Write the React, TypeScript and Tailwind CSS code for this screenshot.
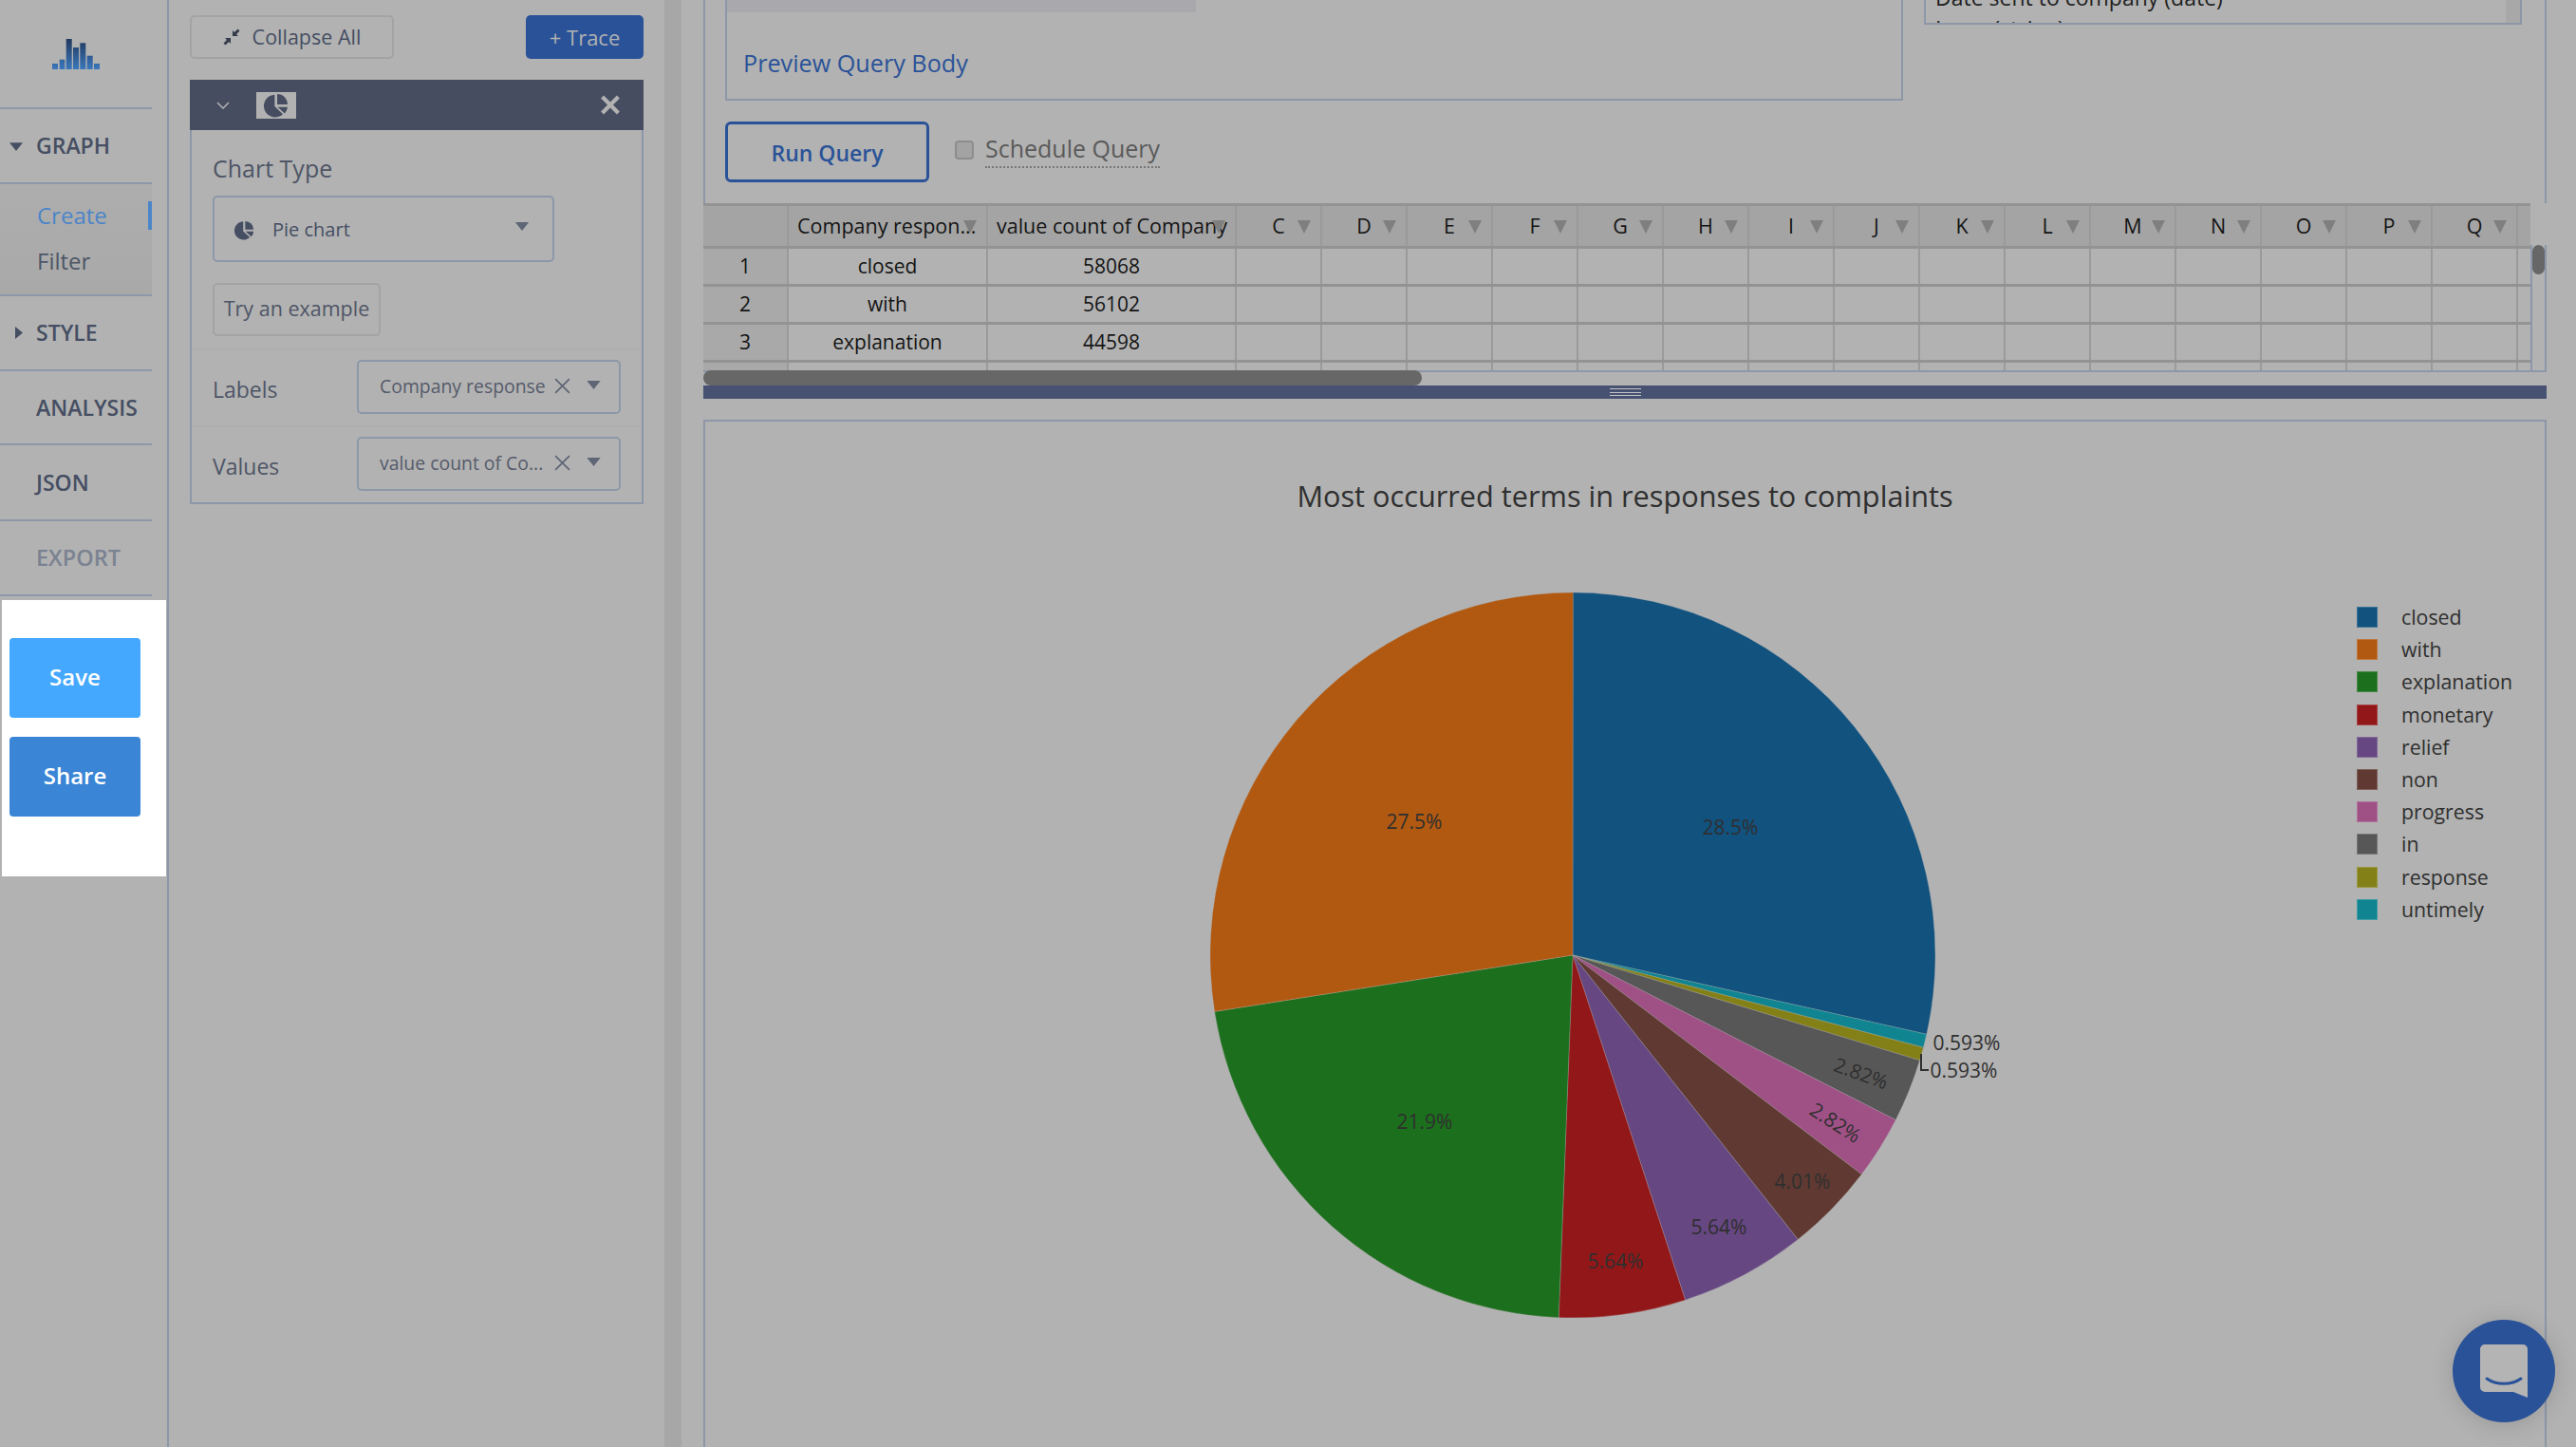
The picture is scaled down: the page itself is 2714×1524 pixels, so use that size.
const slices = [
  { name: "closed", pct: 28.5, color: "#11527f" },
  { name: "untimely", pct: 0.593, color: "#108591" },
  { name: "response", pct: 0.593, color: "#848018" },
  { name: "in", pct: 2.82, color: "#575757" },
  { name: "progress", pct: 2.82, color: "#9f5186" },
  { name: "non", pct: 4.01, color: "#603a32" },
  { name: "relief", pct: 5.64, color: "#664782" },
  { name: "monetary", pct: 5.64, color: "#921718" },
  { name: "explanation", pct: 21.9, color: "#1c6f1c" },
  { name: "with", pct: 27.5, color: "#b25911" },
];

const legendItems = ["closed", "with", "explanation", "monetary", "relief", "non", "progress", "in", "response", "untimely"];

const pieLabels = [
  { text: "28.5%", x: 1823, y: 871, rotate: 0 },
  { text: "27.5%", x: 1490, y: 865, rotate: 0 },
  { text: "21.9%", x: 1501, y: 1181, rotate: 0 },
  { text: "5.64%", x: 1702, y: 1328, rotate: 0 },
  { text: "5.64%", x: 1811, y: 1292, rotate: 0 },
  { text: "4.01%", x: 1899, y: 1244, rotate: 0 },
  { text: "2.82%", x: 1934, y: 1182, rotate: 33 },
  { text: "2.82%", x: 1961, y: 1130, rotate: 20 },
  { text: "0.593%", x: 2072, y: 1098, rotate: 0 },
  { text: "0.593%", x: 2069, y: 1127, rotate: 0 },
];

const letterCols = ["C", "D", "E", "F", "G", "H", "I", "J", "K", "L", "M", "N", "O", "P", "Q"];

const rows = [
  ["1", "closed", "58068"],
  ["2", "with", "56102"],
  ["3", "explanation", "44598"],
  ["", "", ""],
];

const logoBars = [
  { x: 0, w: 6, top: 26 },
  { x: 7.7, w: 5.6, top: 21.7 },
  { x: 14.7, w: 6, top: 0 },
  { x: 22, w: 6, top: 9 },
  { x: 29.3, w: 6, top: 4.3 },
  { x: 36.7, w: 6, top: 17.7 },
  { x: 44, w: 6, top: 26 },
];

function slicePath(startPct: number, pct: number) {
  const cx = 1657;
  const cy = 1006;
  const r = 382;
  const a0 = (startPct / 100) * Math.PI * 2;
  const a1 = ((startPct + pct) / 100) * Math.PI * 2;
  const large = pct > 50 ? 1 : 0;
  return `M${cx} ${cy}L${cx + r * Math.sin(a0)} ${cy - r * Math.cos(a0)}A${r} ${r} 0 ${large} 1 ${cx + r * Math.sin(a1)} ${cy - r * Math.cos(a1)}Z`;
}

function Caret({ className }: { className: string }) {
  return (
    <svg viewBox="0 0 16 10" className={className}>
      <path d="M0 0h16L8 10z" fill="currentColor" />
    </svg>
  );
}

function PieGlyph({ className }: { className: string }) {
  return (
    <svg viewBox="0 0 24 24" className={className}>
      <path d="M10.500 1.500V13l8 7.500A11 11 0 1 1 10.500 1.500z" fill="currentColor" />
      <path d="M13 1a10 10 0 0 1 10 10H13z" fill="currentColor" />
      <path d="M13.500 13.500H23a10 10 0 0 1-2.800 6.300z" fill="currentColor" />
    </svg>
  );
}

function SectionLabel({ label, height, caret, muted }: { label: string; height: string; caret?: "down" | "right"; muted?: boolean }) {
  return (
    <div className={`relative flex w-[160px] items-center border-b-2 border-[#8c97a8] pl-[38px] ${height}`}>
      {caret === "down" && <Caret className="absolute left-[10px] top-[35px] h-[9px] w-[14px] text-[#454e62]" />}
      {caret === "right" && (
        <svg viewBox="0 0 10 16" className="absolute left-[16px] top-[31px] h-[15px] w-[8px] text-[#454e62]">
          <path d="M0 0v16l10-8z" fill="currentColor" />
        </svg>
      )}
      <span className={`font-semibold ${muted ? "text-[23.500px] text-[#7a8291]" : "text-[23px] text-[#454e62]"}`}>{label}</span>
    </div>
  );
}

function Sidebar() {
  return (
    <aside className="flex w-[178px] shrink-0 flex-col border-r-2 border-[#8c97a8]">
      <div className="flex h-[115px] w-[160px] justify-center border-b-2 border-[#8c97a8] pt-[41px]">
        <svg viewBox="0 0 50 32" className="h-[32px] w-[50px]">
          <defs>
            <linearGradient id="logoFill" gradientUnits="userSpaceOnUse" x1="0" y1="0" x2="0" y2="32">
              <stop offset="0" stopColor="#22385c" />
              <stop offset="1" stopColor="#3a78bd" />
            </linearGradient>
          </defs>
          {logoBars.map((bar) => (
            <rect key={bar.x} x={bar.x} y={bar.top} width={bar.w} height={32 - bar.top} fill="url(#logoFill)" />
          ))}
        </svg>
      </div>
      <SectionLabel label="GRAPH" height="h-[79px]" caret="down" />
      <div className="relative flex h-[118px] w-[160px] flex-col border-b-2 border-[#8c97a8] bg-gradient-to-b from-[#adadad] to-[#a9a9a9] pl-[39px] pt-[9px] text-[24px] leading-[48px]">
        <span className="text-[#4c85c8]">Create</span>
        <span className="text-[#4e5566]">Filter</span>
        <div className="absolute right-0 top-[18px] h-[30px] w-[4px] bg-[#4c85c8]" />
      </div>
      <SectionLabel label="STYLE" height="h-[79px]" caret="right" />
      <SectionLabel label="ANALYSIS" height="h-[78px]" />
      <SectionLabel label="JSON" height="h-[80px]" />
      <SectionLabel label="EXPORT" height="h-[79px]" muted />
      <div className="ml-[2px] mt-[4px] flex h-[291px] w-[173px] flex-col gap-[20px] bg-white pl-[8px] pt-[40px]">
        <button className="h-[84px] w-[138px] rounded-[4px] bg-[#45a8ff] pb-[2px] text-[24px] font-semibold text-white">Save</button>
        <button className="h-[84px] w-[138px] rounded-[4px] bg-[#3a85d6] pb-[2px] text-[24px] font-semibold text-white">Share</button>
      </div>
    </aside>
  );
}

function FieldRow({ label, value }: { label: string; value: string }) {
  return (
    <div className="flex h-[81px] items-start justify-between border-t-2 border-[#aeaeae] pl-[22px] pr-[22px] pt-[10px]">
      <span className="mt-[14px] text-[23px] text-[#4e5566]">{label}</span>
      <div className="relative flex h-[57px] w-[278px] items-center rounded-[5px] border-2 border-[#8c97a8] pl-[22px] text-[19.400px] text-[#555b6a]">
        <span className="-mt-[1px]">{value}</span>
        <svg viewBox="0 0 16 16" className="absolute left-[206px] top-[17px] h-[17px] w-[17px] text-[#5c6373]">
          <path d="M1 1l14 14M15 1L1 15" stroke="currentColor" strokeWidth="1.500" fill="none" />
        </svg>
        <Caret className="absolute left-[240px] top-[20px] h-[9px] w-[15px] text-[#5f6675]" />
      </div>
    </div>
  );
}

function TracePanel() {
  return (
    <section className="w-[522px] shrink-0 px-[22px] pt-[16px]">
      <div className="flex items-center justify-between">
        <button className="flex h-[46px] w-[215px] items-center justify-center gap-[13px] rounded-[5px] border-2 border-[#a3a3a3] text-[21.500px] text-[#454e62]">
          <svg viewBox="0 0 18 18" className="h-[18px] w-[18px]">
            <path d="M10 8V2l2 2L15.500 0.500l2 2L14 6l2 2zM8 10v6l-2-2-3.500 3.500-2-2L4 12l-2-2z" fill="#333a49" />
          </svg>
          Collapse All
        </button>
        <button className="h-[46px] w-[124px] rounded-[5px] bg-[#2a5298] text-[22px] text-[#b2b2b2]">+ Trace</button>
      </div>
      <div className="mt-[22px] border-2 border-t-0 border-[#8c97a8]">
        <div className="-mx-[2px] flex h-[53px] items-center bg-[#474d61] pl-[28px] pr-[24px]">
          <svg viewBox="0 0 14 8" className="h-[8px] w-[14px] text-[#b2b2b2]">
            <path d="M1 1l6 6 6-6" stroke="currentColor" strokeWidth="1.500" fill="none" />
          </svg>
          <div className="ml-[28px] flex h-[28px] w-[42px] items-center justify-center bg-[#b2b2b2]">
            <PieGlyph className="h-[26px] w-[26px] text-[#474d61]" />
          </div>
          <svg viewBox="0 0 20 20" className="ml-auto h-[21px] w-[22px] text-[#b2b2b2]">
            <path d="M2 2l16 16M18 2L2 18" stroke="currentColor" strokeWidth="4" fill="none" />
          </svg>
        </div>
        <div className="px-[22px] pb-[13px] pt-[22px]">
          <div className="text-[25px] leading-[36px] text-[#4e5566]">Chart Type</div>
          <div className="relative mt-[11px] flex h-[70px] w-[360px] items-center rounded-[5px] border-2 border-[#8c97a8] pl-[21px] pt-[2px] text-[20px] text-[#454e62]">
            <PieGlyph className="h-[21px] w-[21px] text-[#454e62]" />
            <span className="ml-[19px]">Pie chart</span>
            <Caret className="absolute left-[316px] top-[26px] h-[9px] w-[16px] text-[#5f6675]" />
          </div>
          <button className="mt-[22px] flex h-[56px] w-[177px] items-center justify-center rounded-[5px] border-2 border-[#a3a3a3] pb-[1px] text-[21.500px] text-[#4e5566]">
            Try an example
          </button>
        </div>
        <FieldRow label="Labels" value="Company response" />
        <FieldRow label="Values" value="value count of Co..." />
      </div>
    </section>
  );
}

function HeaderCell({ label, width, alignLeft }: { label: string; width: string; alignLeft?: boolean }) {
  return (
    <div className={`relative flex h-full shrink-0 items-center border-r-2 border-[#9a9a9a] text-[21.500px] ${width} ${alignLeft ? "pl-[9px]" : "justify-center"}`}>
      <span className="whitespace-nowrap">{label}</span>
      <svg viewBox="0 0 14 14" className="absolute right-[10px] top-[15px] h-[14px] w-[14px] text-[#7f7f7f]">
        <path d="M0 0h14L7 14z" fill="currentColor" />
      </svg>
    </div>
  );
}

function QueryTable() {
  return (
    <div className="flex h-[176px] w-[1925px] shrink-0 flex-col overflow-hidden border-t-[3px] border-[#939393] text-[21px] text-[#141414]">
      <div className="flex h-[45px] shrink-0 border-b-[3px] border-[#939393] bg-[#a4a4a4]">
        <div className="h-full w-[90px] shrink-0 border-r-2 border-[#9a9a9a]" />
        <HeaderCell label="Company respon..." width="w-[210px]" alignLeft />
        <HeaderCell label="value count of Company" width="w-[262px]" alignLeft />
        {letterCols.map((col) => (
          <HeaderCell key={col} label={col} width="w-[90px]" />
        ))}
      </div>
      {rows.map((row, i) => (
        <div key={i} className="flex h-[40px] shrink-0 border-b-[3px] border-[#939393]">
          <div className="flex w-[90px] shrink-0 items-center justify-center border-r-2 border-[#9a9a9a] bg-[#a9a9a9]">{row[0]}</div>
          <div className="flex w-[210px] shrink-0 items-center justify-center border-r-2 border-[#9a9a9a]">{row[1]}</div>
          <div className="flex w-[262px] shrink-0 items-center justify-center border-r-2 border-[#9a9a9a]">{row[2]}</div>
          {letterCols.map((col) => (
            <div key={col} className="w-[90px] shrink-0 border-r-2 border-[#9a9a9a]" />
          ))}
        </div>
      ))}
    </div>
  );
}

function PieChart() {
  let start = 0;
  return (
    <svg viewBox="1240 600 900 840" className="h-[840px] w-[900px] shrink-0" style={{ fontFamily: "'Open Sans', sans-serif" }}>
      {slices.map((s) => {
        const d = slicePath(start, s.pct);
        start += s.pct;
        return <path key={s.name} d={d} fill={s.color} stroke="#b2b2b2" strokeWidth="0.3" />;
      })}
      <path d="M2024 1110v17h8" stroke="#2f2f2f" strokeWidth="2" fill="none" />
      {pieLabels.map((l, i) => (
        <text
          key={i}
          x={l.x}
          y={l.y}
          fontSize="21"
          fill="#2f2f2f"
          textAnchor="middle"
          dominantBaseline="central"
          transform={l.rotate ? `rotate(${l.rotate} ${l.x} ${l.y})` : undefined}
        >
          {l.text}
        </text>
      ))}
    </svg>
  );
}

export default function App() {
  return (
    <div className="relative flex h-[1524px] w-[2714px] overflow-hidden bg-[#b2b2b2] font-['Open_Sans',sans-serif]">
      <Sidebar />
      <TracePanel />
      <div className="h-full w-[18px] shrink-0 bg-[#a7a7a7]" />
      <main className="ml-[23px] flex w-[1942px] shrink-0 flex-col">
        <div className="flex h-[214px] shrink-0 flex-col border-x-2 border-[#8c97a8] pl-[21px]">
          <div className="flex items-start">
            <div className="flex h-[106px] w-[1241px] shrink-0 flex-col border-x-2 border-b-2 border-[#8c97a8]">
              <div className="h-[13px] w-[494px] bg-[#a9a9ad]" />
              <a className="ml-[17px] mt-[35px] text-[25.200px] leading-[36px] text-[#2a5298]">Preview Query Body</a>
            </div>
            <div className="relative ml-[22px] flex h-[26px] w-[630px] shrink-0 flex-col overflow-hidden border-x-2 border-b-2 border-[#8c97a8] pl-[10px] text-[23px] leading-[31px] text-[#1f1f1f]">
              <span className="-mt-[18px]">Date sent to company (date)</span>
              <span className="mt-[2px]">Issue (string)</span>
              <div className="absolute right-0 top-0 h-full w-[15px] bg-[#a8a8a8]" />
            </div>
          </div>
          <div className="mt-[22px] flex items-start">
            <button className="flex h-[64px] w-[215px] items-center justify-center rounded-[6px] border-[3px] border-[#2a5298] pt-[3px] text-[23px] font-semibold text-[#2a5298]">
              Run Query
            </button>
            <div className="ml-[27px] mt-[20px] h-[20px] w-[20px] rounded-[4px] border-2 border-[#8d8d8d] bg-[#a3a3a3]" />
            <span className="ml-[12px] mt-[10px] border-b-2 border-dotted border-[#777777] pb-[1px] text-[25px] leading-[36px] text-[#5a5a5a]">Schedule Query</span>
          </div>
        </div>
        <div className="flex h-[176px] shrink-0">
          <QueryTable />
          <div className="flex h-full flex-1 flex-col pt-[44px]">
            <div className="flex-1 border-x-2 border-[#8c97a8]">
              <div className="h-[31px] w-full rounded-[8px] bg-[#676767]" />
            </div>
          </div>
        </div>
        <div className="flex h-[16px] w-full shrink-0 border-t-2 border-[#8c97a8]">
          <div className="-mt-[2px] h-[16px] w-[757px] rounded-[8px] bg-[#676767]" />
        </div>
        <div className="flex h-[14px] w-full shrink-0 flex-col items-center justify-center gap-[2.500px] bg-[#475272] pl-[1px]">
          <div className="h-[1px] w-[33px] bg-[#c4c4c4]" />
          <div className="h-[1px] w-[33px] bg-[#c4c4c4]" />
          <div className="h-[1px] w-[33px] bg-[#c4c4c4]" />
        </div>
        <div className="mt-[22px] flex-1 border-x-2 border-t-2 border-[#8c97a8]">
          <div className="pt-[57px] text-center text-[30.700px] leading-[42px] text-[#2f2f2f]">Most occurred terms in responses to complaints</div>
          <div className="mt-[57px] flex">
            <div className="ml-[497px]">
              <PieChart />
            </div>
            <div className="ml-[343px] mt-[39px] flex flex-col text-[21.300px] text-[#2f2f2f]">
              {legendItems.map((name) => (
                <div key={name} className="flex h-[34.200px] items-start">
                  <div
                    className="h-[22px] w-[22px] border border-[#ffffff30]"
                    style={{ backgroundColor: slices.find((s) => s.name === name)?.color }}
                  />
                  <span className="ml-[25px] leading-[22px]">{name}</span>
                </div>
              ))}
            </div>
          </div>
        </div>
      </main>
      <div className="absolute left-[2584px] top-[1390px] flex h-[108px] w-[108px] items-center justify-center rounded-full bg-[#2a5298] shadow-[0_2px_24px_rgba(0,0,0,0.15)]">
        <svg viewBox="0 0 50 56" className="h-[56px] w-[50px]">
          <path d="M5 0h40a5 5 0 0 1 5 5v51l-15-6H5a5 5 0 0 1-5-5V5a5 5 0 0 1 5-5z" fill="#b4b4b4" />
          <path d="M7 36c10 7 26 7 36 0" stroke="#2a5298" strokeWidth="3" strokeLinecap="round" fill="none" />
        </svg>
      </div>
    </div>
  );
}
